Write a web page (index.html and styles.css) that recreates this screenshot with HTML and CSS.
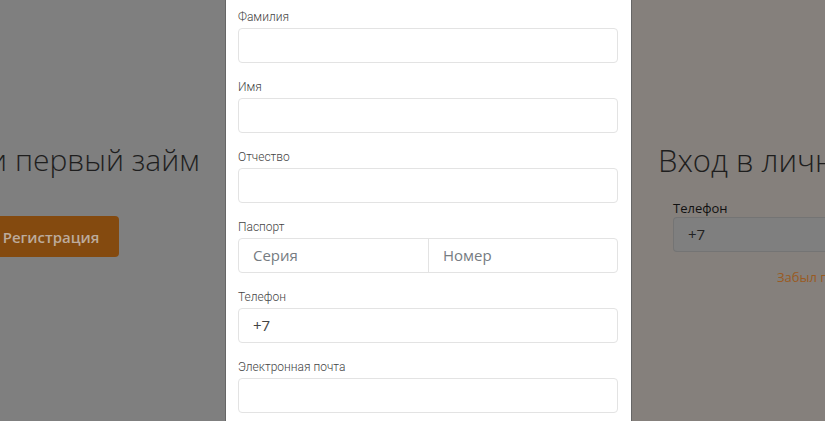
FILE: index.html
```html
<!DOCTYPE html>
<html lang="ru">
<head>
<meta charset="utf-8">
<title>Регистрация</title>
<link rel="stylesheet" href="styles.css">
</head>
<body>
<div class="page">
  <section class="promo">
    <h1 class="promo-title">Получи первый займ</h1>
    <button class="promo-btn" type="button">Регистрация</button>
  </section>
  <section class="login">
    <h2 class="login-title">Вход в личный кабинет</h2>
    <div class="login-label">Телефон</div>
    <div class="login-input">+7</div>
    <a class="login-link" href="#">Забыл пароль?</a>
  </section>
</div>
<div class="modal">
  <form class="form">
    <div class="group">
      <label class="label">Фамилия</label>
      <div class="input"></div>
    </div>
    <div class="group">
      <label class="label">Имя</label>
      <div class="input"></div>
    </div>
    <div class="group">
      <label class="label">Отчество</label>
      <div class="input"></div>
    </div>
    <div class="group">
      <label class="label">Паспорт</label>
      <div class="input split">
        <span class="half">Серия</span>
        <span class="half">Номер</span>
      </div>
    </div>
    <div class="group">
      <label class="label">Телефон</label>
      <div class="input filled">+7</div>
    </div>
    <div class="group">
      <label class="label">Электронная почта</label>
      <div class="input"></div>
    </div>
  </form>
</div>
</body>
</html>
```

FILE: styles.css
```css
* { box-sizing: border-box; }
html, body {
  margin: 0;
  padding: 0;
  width: 825px;
  height: 421px;
  overflow: hidden;
  font-family: "Open Sans", "Liberation Sans", sans-serif;
}
body { position: relative; }

.page {
  display: grid;
  grid-template-columns: 412px 1fr;
  height: 421px;
  overflow: hidden;
}

.promo {
  background: #7f7f7f;
  padding: 140px 310px 0 0;
  display: flex;
  flex-direction: column;
  align-items: center;
  white-space: nowrap;
}
.promo-title {
  margin: 0;
  font-size: 30px;
  line-height: 40px;
  font-weight: 300;
  color: #1e1e1e;
}
.promo-btn {
  margin-top: 36px;
  height: 41px;
  padding: 0 20px;
  border: 0;
  border-radius: 4px;
  background: #844a0f;
  color: #bcab9c;
  font-family: "Open Sans", sans-serif;
  font-weight: 600;
  font-size: 15px;
}

.login {
  background: #85807c;
  padding: 140px 0 0 246px;
  white-space: nowrap;
  overflow: hidden;
}
.login-title {
  margin: 0 0 19px;
  font-size: 31px;
  line-height: 40px;
  font-weight: 300;
  color: #1e1e1e;
}
.login-label {
  margin-left: 15px;
  font-size: 13px;
  line-height: 18px;
  color: #111;
}
.login-input {
  margin-left: 15px;
  height: 35px;
  border: 1px solid #747474;
  border-right: 0;
  border-radius: 4px 0 0 4px;
  background: #7f7f7f;
  padding-left: 14px;
  font-size: 15px;
  line-height: 33px;
  color: #222;
}
.login-link {
  display: block;
  margin: 16px 0 0 119px;
  font-size: 13px;
  line-height: 18px;
  color: #9a5a22;
  text-decoration: none;
}

.modal {
  position: absolute;
  top: 0;
  left: 225px;
  width: 407px;
  height: 421px;
  background: #fff;
  border-left: 1px solid #666;
  border-right: 1px solid #666;
  padding: 8px 13px 0 12px;
}
.form {
  display: flex;
  flex-direction: column;
  gap: 15px;
}
.group {
  display: flex;
  flex-direction: column;
  gap: 2px;
}
.label {
  font-family: Roboto, "Open Sans", sans-serif;
  font-size: 12px;
  font-weight: 300;
  line-height: 18px;
  color: #444;
}
.input {
  height: 35px;
  border: 1px solid #e3e3e3;
  border-radius: 4px;
  background: #fff;
  font-size: 15px;
  line-height: 33px;
  color: #555;
  padding-left: 14px;
}
.input.filled { color: #444; }
.input.split {
  display: grid;
  grid-template-columns: 1fr 1fr;
  padding-left: 0;
}
.half {
  padding-left: 14px;
  color: #767c82;
}
.half + .half { border-left: 1px solid #e3e3e3; }
```
